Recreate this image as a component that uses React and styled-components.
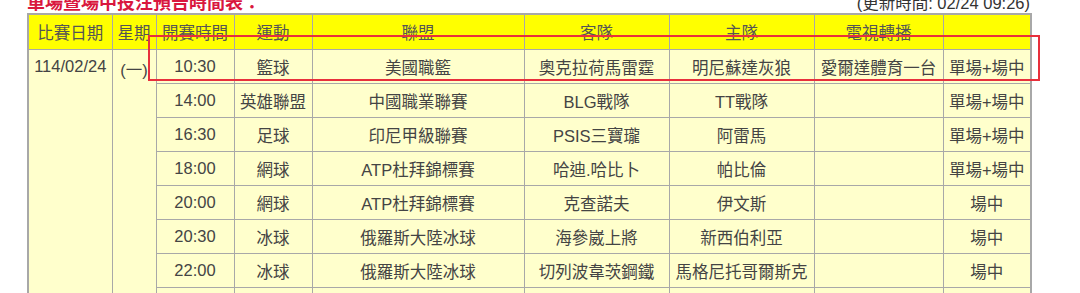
import React from "react";
import styled, { createGlobalStyle } from "styled-components";

const Global = createGlobalStyle`
	html, body {
		margin: 0;
		padding: 0;
		background: #ffffff;
		overflow: hidden;
	}
	body {
		font-family: "Liberation Sans", "Noto Sans CJK TC", Arial, sans-serif;
	}
`;

const Page = styled.div`
	width: 1003px;
	margin-left: 27px;
	margin-top: -13px;
	position: relative;
`;

const TitleBar = styled.div`
	display: flex;
	justify-content: space-between;
	align-items: flex-end;
	height: 26px;
`;

const Title = styled.div`
	color: #d9173e;
	font-size: 18px;
	font-weight: 700;
	line-height: 20px;
`;

const Updated = styled.div`
	color: #333;
	font-size: 16.5px;
	line-height: 20px;
`;

const Table = styled.table`
	width: 1003px;
	table-layout: fixed;
	border-collapse: collapse;
	border: 2px solid #a8a8a8;
	font-size: 16.5px;
	color: #444;
`;

const HeadCell = styled.th`
	height: 34px;
	padding: 0;
	background: #ffff00;
	border: 1px solid #a8a8a8;
	font-weight: 400;
	color: #555;
	text-align: center;
	vertical-align: middle;
	white-space: nowrap;
`;

const Cell = styled.td`
	height: 33px;
	padding: 0;
	background: #ffffcc;
	border: 1px solid #a8a8a8;
	text-align: center;
	vertical-align: middle;
	white-space: nowrap;
	overflow: hidden;
`;

const SpanCell = styled(Cell)`
	vertical-align: top;
	padding-top: 7px;
`;

const Highlight = styled.div`
	position: absolute;
	left: 121px;
	top: 48px;
	width: 888px;
	height: 42px;
	border: 2px solid #e8303c;
	pointer-events: none;
`;

const widths = [84, 44, 78, 78, 212, 145, 145, 129, 88];
const heads = ["比賽日期", "星期", "開賽時間", "運動", "聯盟", "客隊", "主隊", "電視轉播", ""];

const rows = [
	["10:30", "籃球", "美國職籃", "奧克拉荷馬雷霆", "明尼蘇達灰狼", "愛爾達體育一台", "單場+場中"],
	["14:00", "英雄聯盟", "中國職業聯賽", "BLG戰隊", "TT戰隊", "", "單場+場中"],
	["16:30", "足球", "印尼甲級聯賽", "PSIS三寶瓏", "阿雷馬", "", "單場+場中"],
	["18:00", "網球", "ATP杜拜錦標賽", "哈迪.哈比卜", "帕比倫", "", "單場+場中"],
	["20:00", "網球", "ATP杜拜錦標賽", "克查諾夫", "伊文斯", "", "場中"],
	["20:30", "冰球", "俄羅斯大陸冰球", "海參崴上將", "新西伯利亞", "", "場中"],
	["22:00", "冰球", "俄羅斯大陸冰球", "切列波韋茨鋼鐵", "馬格尼托哥爾斯克", "", "場中"],
	["23:00", "冰球", "俄羅斯大陸冰球", "莫斯科中央陸軍", "聖彼得堡陸軍", "", "場中"],
];

export default function App() {
	return (
		<>
			<Global />
			<Page>
				<TitleBar>
					<Title>單場暨場中投注預告時間表：</Title>
					<Updated>(更新時間: 02/24 09:26)</Updated>
				</TitleBar>
				<Table>
					<colgroup>
						{widths.map((w, i) => (
							<col key={i} style={{ width: w }} />
						))}
					</colgroup>
					<thead>
						<tr>
							{heads.map((h, i) => (
								<HeadCell key={i}>{h}</HeadCell>
							))}
						</tr>
					</thead>
					<tbody>
						{rows.map((r, i) => (
							<tr key={i}>
								{i === 0 && (
									<>
										<SpanCell rowSpan={rows.length}>114/02/24</SpanCell>
										<SpanCell rowSpan={rows.length}>(一)</SpanCell>
									</>
								)}
								{r.map((c, j) => (
									<Cell key={j}>{c}</Cell>
								))}
							</tr>
						))}
					</tbody>
				</Table>
				<Highlight />
			</Page>
		</>
	);
}
